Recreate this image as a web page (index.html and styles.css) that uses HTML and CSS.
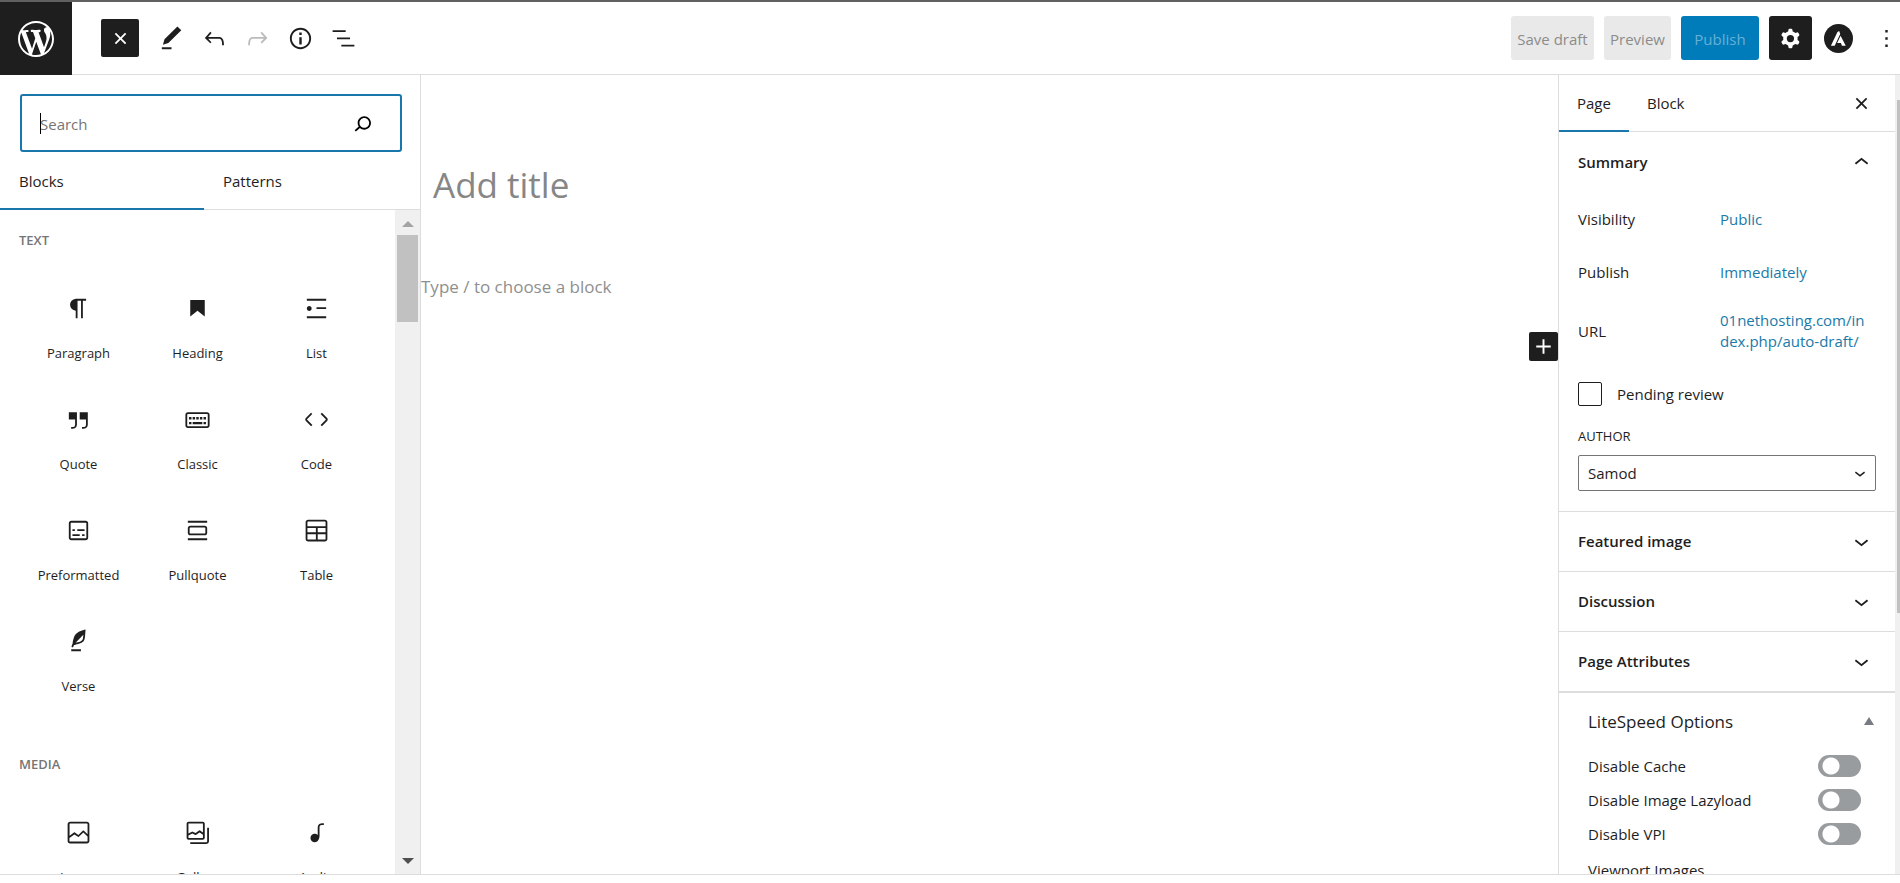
FILE: index.html
```html
<!DOCTYPE html>
<html lang="en">
<head>
<meta charset="utf-8">
<title>Add New Page</title>
<link rel="stylesheet" href="styles.css">
</head>
<body>
<div class="editor">
  <header class="topbar">
    <a class="site-logo" href="#" aria-label="View Pages">
      <svg viewBox="0 0 20 20"><path d="M20 10c0-5.51-4.49-10-10-10C4.48 0 0 4.49 0 10c0 5.52 4.48 10 10 10 5.51 0 10-4.48 10-10zM7.78 15.37L4.37 6.22c.55-.02 1.17-.08 1.17-.08.5-.06.44-1.13-.06-1.11 0 0-1.45.11-2.37.11-.18 0-.37 0-.58-.01C4.12 2.69 6.87 1.11 10 1.11c2.33 0 4.45.87 6.05 2.34-.68-.11-1.65.39-1.65 1.58 0 .74.45 1.36.9 2.1.35.61.55 1.36.55 2.46 0 1.49-1.4 5-1.4 5l-3.03-8.37c.54-.02.82-.17.82-.17.5-.05.44-1.25-.06-1.22 0 0-1.44.12-2.38.12-.87 0-2.33-.12-2.33-.12-.5-.03-.56 1.2-.06 1.22l.92.08 1.26 3.41zM17.41 10c.24-.64.74-1.87.43-4.25.7 1.29 1.05 2.71 1.05 4.25 0 3.29-1.73 6.24-4.4 7.78.97-2.59 1.94-5.2 2.92-7.78zM6.1 18.09C3.12 16.65 1.11 13.53 1.11 10c0-1.3.23-2.48.72-3.59C3.25 10.3 4.67 14.2 6.1 18.09zm4.03-6.63l2.58 6.98c-.86.29-1.76.45-2.71.45-.79 0-1.57-.11-2.29-.33.81-2.38 1.62-4.74 2.42-7.1z"/></svg>
    </a>
    <div class="tools">
      <button class="tool tool-inserter" aria-label="Toggle block inserter"><svg class="icon" viewBox="0 0 24 24"><path d="M12 13.06l3.712 3.713 1.061-1.06L13.061 12l3.712-3.712-1.06-1.06L12 10.938 8.288 7.227l-1.061 1.06L10.939 12l-3.712 3.712 1.06 1.061L12 13.061z"/></svg></button>
      <button class="tool" aria-label="Tools"><svg class="icon" viewBox="0 0 24 24"><path d="M20.1 5.1L16.9 2 6.2 12.7l-1.3 4.4 4.5-1.3L20.1 5.1zM4 20.8h8v-1.5H4v1.5z"/></svg></button>
      <button class="tool" aria-label="Undo"><svg class="icon" viewBox="0 0 24 24"><path d="M18.3 11.7c-.6-.6-1.4-.9-2.3-.9H6.7l2.9-3.3-1.1-1-4.5 5L8.5 16l1-1-2.7-2.7H16c.5 0 .9.2 1.3.5 1 1 1 3.4 1 4.5v.3h1.5v-.2c0-1.5 0-4.3-1.5-5.7z"/></svg></button>
      <button class="tool" aria-label="Redo" disabled><svg class="icon" viewBox="0 0 24 24"><path d="M15.6 6.5l-1.1 1 2.9 3.3H8c-.9 0-1.7.3-2.3.9-1.4 1.5-1.4 4.2-1.4 5.6v.2h1.5v-.3c0-1.1 0-3.5 1-4.5.3-.3.7-.5 1.3-.5h9.2L14.5 15l1.1 1.1 4.6-4.6-4.6-5z"/></svg></button>
      <button class="tool" aria-label="Details"><svg class="icon" viewBox="0 0 24 24"><path d="M12 3.2c-4.8 0-8.8 3.9-8.8 8.8 0 4.8 3.9 8.8 8.8 8.8 4.8 0 8.8-3.9 8.8-8.8 0-4.8-4-8.8-8.8-8.8zm0 16c-4 0-7.2-3.3-7.2-7.2C4.8 8 8 4.8 12 4.8s7.2 3.3 7.2 7.2c0 4-3.2 7.2-7.2 7.2zM11 17h2v-6h-2v6zm0-8h2V7h-2v2z"/></svg></button>
      <button class="tool" aria-label="List View"><svg class="icon" viewBox="0 0 24 24"><path d="M13.8 5.2H3v1.5h10.8V5.2zm-3.6 12v1.5H21v-1.5H10.2zm7.2-6H6.6v1.5h10.8v-1.5z"/></svg></button>
    </div>
    <div class="actions">
      <button class="btn btn-draft" disabled>Save draft</button>
      <button class="btn btn-preview" disabled>Preview</button>
      <button class="btn btn-publish" disabled>Publish</button>
      <button class="btn btn-settings" aria-label="Settings"><svg class="icon" viewBox="0 0 24 24"><path fill-rule="evenodd" d="M10.289 4.836A1 1 0 0111.275 4h1.306a1 1 0 01.987.836l.244 1.466c.787.26 1.503.679 2.108 1.218l1.393-.522a1 1 0 011.216.437l.653 1.13a1 1 0 01-.23 1.273l-1.148.944a6.025 6.025 0 010 2.435l1.149.946a1 1 0 01.23 1.272l-.653 1.13a1 1 0 01-1.216.437l-1.394-.522c-.605.54-1.32.958-2.108 1.218l-.244 1.466a1 1 0 01-.987.836h-1.306a1 1 0 01-.986-.836l-.244-1.466a5.995 5.995 0 01-2.108-1.218l-1.394.522a1 1 0 01-1.217-.436l-.653-1.131a1 1 0 01.23-1.272l1.149-.946a6.026 6.026 0 010-2.435l-1.148-.944a1 1 0 01-.23-1.272l.653-1.131a1 1 0 011.217-.437l1.393.522a5.994 5.994 0 012.108-1.218l.244-1.466zM14.929 12a3 3 0 11-6 0 3 3 0 016 0z"/></svg></button>
      <button class="plain astra" aria-label="Astra Settings"><svg class="icon" viewBox="0 0 84 84"><circle cx="42" cy="42" r="42"/><path fill="#fff" d="M20 63l19-40 5-3 3 9-16 34zM48 34l15 29H52l-3-8H38z"/></svg></button>
      <button class="plain more" aria-label="Options"><svg class="icon" viewBox="0 0 24 24"><path d="M13 19h-2v-2h2v2zm0-6h-2v-2h2v2zm0-6h-2V5h2v2z"/></svg></button>
    </div>
  </header>

  <div class="body">
    <aside class="inserter">
      <div class="search">
        <input class="search-input" type="search" placeholder="Search" aria-label="Search for blocks and patterns">
        <span class="caret"></span>
        <svg class="icon search-icon" viewBox="0 0 24 24"><path d="M13.5 6C10.5 6 8 8.5 8 11.5c0 1.1.3 2.1.9 3l-3.4 3 1 1.1 3.4-2.9c1 .9 2.2 1.4 3.6 1.4 3 0 5.5-2.5 5.5-5.5C19 8.5 16.5 6 13.5 6zm0 9.5c-2.2 0-4-1.8-4-4s1.8-4 4-4 4 1.8 4 4-1.8 4-4 4z"/></svg>
      </div>
      <div class="inserter-tabs" role="tablist">
        <button class="inserter-tab selected" role="tab" aria-selected="true">Blocks</button>
        <button class="inserter-tab" role="tab" aria-selected="false">Patterns</button>
      </div>
      <div class="inserter-panel">
        <div class="block-list">
          <h2 class="category">Text</h2>
          <div class="blocks">
            <button class="block"><svg class="icon" viewBox="0 0 24 24"><path d="M18.3 4H9.9v-.1l-.9.2c-2.3.4-4 2.4-4 4.8s1.7 4.4 4 4.8l.7.1V20h1.5V5.5h2.9V20h1.5V5.5h2.7V4z"/></svg>Paragraph</button>
            <button class="block"><svg class="icon" viewBox="0 0 24 24"><path d="M6 5v13.6l6-4.8 6 4.8V5H6z"/></svg>Heading</button>
            <button class="block"><svg class="icon" viewBox="0 0 24 24"><path d="M4 4v1.5h16V4H4zm8 8.5h8V11h-8v1.5zM4 20h16v-1.5H4V20zm4-8c0-1.1-.9-2-2-2s-2 .9-2 2 .9 2 2 2 2-.9 2-2z"/></svg>List</button>
            <button class="block"><svg class="icon" viewBox="0 0 24 24"><path d="M13 6v6h5.2v4c0 .8-.2 1.4-.5 1.7-.6.6-1.6.6-2.5.5h-.3v1.5h.5c1 0 2.3-.1 3.3-1 .6-.6 1-1.6 1-2.8V6H13zm-9 6h5.2v4c0 .8-.2 1.4-.5 1.7-.6.6-1.6.6-2.5.5h-.3v1.5h.5c1 0 2.3-.1 3.3-1 .6-.6 1-1.6 1-2.8V6H4v6z"/></svg>Quote</button>
            <button class="block"><svg class="icon" viewBox="0 0 24 24"><path d="M20 6H4c-1.1 0-2 .9-2 2v9c0 1.1.9 2 2 2h16c1.1 0 2-.9 2-2V8c0-1.1-.9-2-2-2zm.5 11c0 .3-.2.5-.5.5H4c-.3 0-.5-.2-.5-.5V8c0-.3.2-.5.5-.5h16c.3 0 .5.2.5.5v9zM10 10H8v2h2v-2zm-5 2h2v-2H5v2zm8-2h-2v2h2v-2zm-5 6h8v-2H8v2zm6-4h2v-2h-2v2zm3 0h2v-2h-2v2zm0 4h2v-2h-2v2zM5 16h2v-2H5v2z"/></svg>Classic</button>
            <button class="block"><svg class="icon" viewBox="0 0 24 24"><path d="M20.8 10.7l-4.3-4.3-1.1 1.1 4.3 4.3c.1.1.1.3 0 .4l-4.3 4.3 1.1 1.1 4.3-4.3c.7-.8.7-1.9 0-2.6zM4.2 11.8l4.3-4.3-1-1-4.3 4.3c-.7.7-.7 1.8 0 2.5l4.3 4.3 1.1-1.1-4.3-4.3c-.2-.1-.2-.3-.1-.4z"/></svg>Code</button>
            <button class="block"><svg class="icon" viewBox="0 0 24 24"><path d="M18 4H6c-1.1 0-2 .9-2 2v12c0 1.1.9 2 2 2h12c1.1 0 2-.9 2-2V6c0-1.1-.9-2-2-2zm.5 14c0 .3-.2.5-.5.5H6c-.3 0-.5-.2-.5-.5V6c0-.3.2-.5.5-.5h12c.3 0 .5.2.5.5v12z"/><path d="M7 16.5h6V15H7v1.5zm4-4h6V11h-6v1.5zM9 11H7v1.5h2V11zm6 5.5h2V15h-2v1.5z"/></svg>Preformatted</button>
            <button class="block"><svg class="icon" viewBox="0 0 24 24"><path d="M18 8H6c-1.1 0-2 .9-2 2v4c0 1.1.9 2 2 2h12c1.1 0 2-.9 2-2v-4c0-1.1-.9-2-2-2zm.5 6c0 .3-.2.5-.5.5H6c-.3 0-.5-.2-.5-.5v-4c0-.3.2-.5.5-.5h12c.3 0 .5.2.5.5v4zM4 4v1.5h16V4H4zm0 16h16v-1.5H4V20z"/></svg>Pullquote</button>
            <button class="block"><svg class="icon" viewBox="0 0 24 24"><path d="M19 3H5c-1.1 0-2 .9-2 2v14c0 1.1.9 2 2 2h14c1.1 0 2-.9 2-2V5c0-1.1-.9-2-2-2zM5 4.5h14c.3 0 .5.2.5.5v3.5h-15V5c0-.3.2-.5.5-.5zm8 5.5h6.5v3.5H13V10zm-1.5 3.5h-7V10h7v3.5zm-7 5.5v-4h7v4.5H5c-.3 0-.5-.2-.5-.5zm14.5.5h-6V15h6.5v4c0 .3-.2.5-.5.5z"/></svg>Table</button>
            <button class="block"><svg class="icon" viewBox="0 0 24 24"><path d="M17.8 2l-.9.3c-.1 0-3.6 1-5.2 2.1C10 5.5 9.3 6.5 8.9 7.1c-.6.9-1.7 4.7-1.7 6.3l-.9 2.3c-.2.4 0 .8.4 1 .1 0 .2.1.3.1.3 0 .6-.2.7-.5l.6-1.5c.3 0 .7-.1 1.2-.2.7-.1 1.4-.3 2.2-.5.8-.2 1.6-.5 2.4-.8.7-.3 1.4-.7 1.9-1.2s.8-1.2 1-1.9c.2-.7.3-1.6.4-2.4.1-.8.1-1.7.2-2.5 0-.8.1-1.5.2-2.1V2zm-1.9 5.6c-.1.8-.2 1.5-.3 2.1-.2.6-.4 1-.6 1.3-.3.3-.8.6-1.4.9-.7.3-1.4.5-2.2.8-.6.2-1.3.3-1.8.4L15 7.5c.3-.3.6-.7 1-1.1 0 .4 0 .8-.1 1.2zM6 20h8v-1.5H6V20z"/></svg>Verse</button>
          </div>
          <h2 class="category">Media</h2>
          <div class="blocks">
            <button class="block"><svg class="icon" viewBox="0 0 24 24"><path d="M19 3H5c-1.1 0-2 .9-2 2v14c0 1.1.9 2 2 2h14c1.1 0 2-.9 2-2V5c0-1.1-.9-2-2-2zM5 4.5h14c.3 0 .5.2.5.5v8.4l-3-2.9c-.3-.3-.8-.3-1 0L11.9 14 9 12c-.3-.2-.6-.2-.8 0l-3.6 2.6V5c-.1-.3.1-.5.4-.5zm14 15H5c-.3 0-.5-.2-.5-.5v-2.4l4.1-3 3 1.9c.3.2.7.2.9-.1L16 12l3.5 3.4V19c0 .3-.2.5-.5.5z"/></svg>Image</button>
            <button class="block"><svg class="icon" viewBox="0 0 24 24"><path fill-rule="evenodd" d="M16.375 4.5H4.625a.125.125 0 0 0-.125.125v8.254l2.859-1.54a.75.75 0 0 1 .68-.016l2.384 1.142 2.89-2.074a.75.75 0 0 1 .874 0l2.313 1.66V4.625a.125.125 0 0 0-.125-.125Zm.125 9.398-2.75-1.975-2.813 2.02a.75.75 0 0 1-.76.067l-2.444-1.17L4.5 14.583v1.792c0 .069.056.125.125.125h11.75a.125.125 0 0 0 .125-.125v-2.477ZM4.625 3C3.728 3 3 3.728 3 4.625v11.75C3 17.273 3.728 18 4.625 18h11.75c.898 0 1.625-.727 1.625-1.625V4.625C18 3.728 17.273 3 16.375 3H4.625ZM20 8v11c0 .69-.31 1-.999 1H6v1.5h13.001c1.52 0 2.499-.982 2.499-2.5V8H20Z"/></svg>Gallery</button>
            <button class="block"><svg class="icon" viewBox="0 0 24 24"><path d="M17.7 4.3c-1.2 0-2.8 0-3.8 1-.6.6-.9 1.5-.9 2.6V14c-.6-.6-1.5-1-2.5-1C8.6 13 7 14.6 7 16.5S8.6 20 10.5 20c1.5 0 2.8-1 3.3-2.3.5-.8.7-1.8.7-2.5V7.9c0-.7.2-1.2.5-1.6.6-.6 1.8-.6 2.8-.6h.3V4.3h-.4z"/></svg>Audio</button>
          </div>
        </div>
        <div class="scrollbar">
          <svg class="scroll-arrow" viewBox="0 0 12 6"><path fill="#a3a3a3" d="M0 6l6-6 6 6z"/></svg>
          <div class="scroll-thumb"></div>
          <svg class="scroll-arrow scroll-down" viewBox="0 0 12 6"><path fill="#505050" d="M0 0h12L6 6z"/></svg>
        </div>
      </div>
    </aside>

    <main class="canvas">
      <h1 class="post-title">Add title</h1>
      <p class="prompt">Type / to choose a block</p>
      <button class="add-block" aria-label="Add block"><svg class="icon" viewBox="0 0 24 24"><path d="M18 11.2h-5.2V6h-1.6v5.2H6v1.6h5.2V18h1.6v-5.2H18z"/></svg></button>
    </main>

    <aside class="settings">
      <div class="settings-content">
        <div class="settings-tabs">
          <button class="settings-tab selected">Page</button>
          <button class="settings-tab">Block</button>
          <button class="plain close" aria-label="Close settings"><svg class="icon" viewBox="0 0 24 24"><path d="M12 13.06l3.712 3.713 1.061-1.06L13.061 12l3.712-3.712-1.06-1.06L12 10.938 8.288 7.227l-1.061 1.06L10.939 12l-3.712 3.712 1.06 1.061L12 13.061z"/></svg></button>
        </div>
        <section class="summary">
          <button class="panel-toggle">Summary<svg class="icon" viewBox="0 0 24 24"><path d="M6.5 12.4L12 8l5.5 4.4-.9 1.2L12 10l-4.5 3.6-1-1.2z"/></svg></button>
          <div class="summary-body">
            <div class="field"><span>Visibility</span><a href="#">Public</a></div>
            <div class="field"><span>Publish</span><a href="#">Immediately</a></div>
            <div class="field field-url"><span>URL</span><a href="#">01nethosting.com/index.php/auto-draft/</a></div>
            <label class="pending"><input class="checkbox" type="checkbox">Pending review</label>
            <label class="author-label" for="author">Author</label>
            <div class="select-wrap">
              <select class="author" id="author"><option>Samod</option></select>
              <svg class="select-arrow" viewBox="0 0 24 24"><path d="M17.5 11.6L12 16l-5.5-4.4.9-1.2L12 14l4.5-3.6 1 1.2z"/></svg>
            </div>
          </div>
        </section>
        <section class="panel"><button class="panel-toggle">Featured image<svg class="icon" viewBox="0 0 24 24"><path d="M17.5 11.6L12 16l-5.5-4.4.9-1.2L12 14l4.5-3.6 1 1.2z"/></svg></button></section>
        <section class="panel"><button class="panel-toggle">Discussion<svg class="icon" viewBox="0 0 24 24"><path d="M17.5 11.6L12 16l-5.5-4.4.9-1.2L12 14l4.5-3.6 1 1.2z"/></svg></button></section>
        <section class="panel"><button class="panel-toggle">Page Attributes<svg class="icon" viewBox="0 0 24 24"><path d="M17.5 11.6L12 16l-5.5-4.4.9-1.2L12 14l4.5-3.6 1 1.2z"/></svg></button></section>
        <section class="litespeed">
          <button class="litespeed-title">LiteSpeed Options<svg class="litespeed-arrow" viewBox="0 0 10 8"><path d="M0 8l5-8 5 8z"/></svg></button>
          <label class="option">Disable Cache<input class="switch" type="checkbox"></label>
          <label class="option">Disable Image Lazyload<input class="switch" type="checkbox"></label>
          <label class="option">Disable VPI<input class="switch" type="checkbox"></label>
          <p class="viewport">Viewport Images</p>
        </section>
      </div>
      <div class="settings-scrollbar"><div class="settings-thumb"></div></div>
    </aside>
  </div>
  <footer class="footer"></footer>
</div>
</body>
</html>
```

FILE: styles.css
```css
* { box-sizing: border-box; }

body {
  margin: 0;
  background: #fff;
  color: #1e1e1e;
  font: 15px/21px "Open Sans", "Noto Sans", sans-serif;
}

button, input, select { font: inherit; color: inherit; }
button { padding: 0; border: 0; background: none; }
h1, h2, p { margin: 0; }
a { color: #1a7aa8; text-decoration: none; }
svg { display: block; flex: none; fill: currentColor; }
.icon { width: 29px; height: 29px; }

.editor {
  display: flex;
  flex-direction: column;
  height: 100vh;
  overflow: hidden;
  border-top: 2px solid #606060;
}

/* Top bar */
.topbar {
  display: flex;
  align-items: stretch;
  height: 73px;
  flex: none;
  border-bottom: 1px solid #ddd;
}
.site-logo {
  display: flex;
  align-items: center;
  justify-content: center;
  width: 72px;
  height: 73px;
  background: #1e1e1e;
  color: #fff;
}
.site-logo svg { width: 36px; height: 36px; }
.tools { display: flex; align-items: center; gap: 5px; padding-left: 29px; }
.tool {
  display: flex;
  align-items: center;
  justify-content: center;
  width: 38px;
  height: 38px;
  border-radius: 2px;
}
.tool:disabled { color: #bbb; }
.tool-inserter { background: #1e1e1e; color: #fff; margin-right: 8px; }
.actions { display: flex; align-items: center; gap: 10px; margin: 0 -1px 0 auto; }
.btn {
  display: flex;
  align-items: center;
  justify-content: center;
  height: 44px;
  border-radius: 3px;
  white-space: nowrap;
}
.btn-draft { width: 83px; padding-top: 2px; background: #e9e9e9; color: #8c8c8c; }
.btn-preview { width: 67px; padding-top: 2px; background: #e9e9e9; color: #8c8c8c; }
.btn-publish { width: 78px; padding-top: 2px; background: #007cba; color: #66b0d6; }
.btn-settings { width: 43px; background: #1e1e1e; color: #fff; }
.plain { display: flex; }
.astra { margin-left: 2px; }
.more { margin-left: 9px; }

/* Columns */
.body { display: flex; flex: 1; min-height: 0; }

/* Block inserter */
.inserter {
  display: flex;
  flex-direction: column;
  width: 421px;
  flex: none;
  border-right: 1px solid #ddd;
}
.search { position: relative; margin: 19px 18px 0 20px; }
.search-input {
  display: block;
  width: 100%;
  height: 58px;
  padding: 2px 60px 0 18px;
  border: 2px solid #1a77ab;
  border-radius: 3px;
  background: #fff;
  outline: 0;
  appearance: none;
}
.search-input::placeholder { color: #757575; opacity: 1; }
.caret { position: absolute; left: 20px; top: 19px; width: 1px; height: 21px; background: #000; }
.search-icon { position: absolute; right: 25px; top: 15px; color: #000; }
.inserter-tabs { display: flex; height: 58px; flex: none; border-bottom: 1px solid #ddd; }
.inserter-tab { padding: 0 19px; height: 58px; font-weight: 500; text-align: left; }
.inserter-tab.selected { width: 204px; padding-top: 2px; border-bottom: 2px solid #1a77ab; }
.inserter-panel { display: flex; flex: 1; min-height: 0; }
.block-list { flex: 1; overflow: hidden; padding: 19px 0 0 19px; }
.category { color: #757575; font-size: 13px; font-weight: 600; line-height: 22px; text-transform: uppercase; }
.blocks { display: grid; grid-template-columns: repeat(3, 119px); padding: 21px 0 37px; }
.block {
  display: flex;
  flex-direction: column;
  align-items: center;
  gap: 20px;
  height: 111px;
  padding-top: 22px;
  font-size: 13px;
  line-height: 20px;
}
.scrollbar { display: flex; flex-direction: column; align-items: center; width: 25px; padding: 11px 0 10px; background: #f0f0f0; }
.scroll-arrow { width: 12px; height: 6px; }
.scroll-thumb { width: 21px; height: 87px; margin-top: 8px; background: #c1c1c1; }
.scroll-down { margin-top: auto; }

/* Canvas */
.canvas { display: flex; flex-direction: column; flex: 1; min-width: 0; padding-top: 84px; }
.post-title { padding-left: 12px; color: #868686; font-size: 35px; font-weight: 400; line-height: 52px; }
.prompt { padding-top: 62px; color: #8f8f8f; font-size: 17px; line-height: 28px; }
.add-block {
  display: flex;
  align-self: flex-end;
  margin-top: 31px;
  border-radius: 2px;
  background: #1e1e1e;
  color: #fff;
}

/* Settings sidebar */
.settings { display: flex; width: 342px; flex: none; border-left: 1px solid #ddd; }
.settings-content { flex: 1; min-width: 0; overflow: hidden; }
.settings-tabs { display: flex; height: 57px; border-bottom: 1px solid #ddd; }
.settings-tab { height: 57px; padding: 0 18px; font-weight: 500; }
.settings-tab.selected { padding-top: 2px; border-bottom: 2px solid #1a77ab; }
.close { align-items: center; margin-left: auto; margin-right: 19px; }
.panel-toggle {
  display: flex;
  align-items: center;
  justify-content: space-between;
  width: 100%;
  height: 60px;
  padding: 0 19px;
  font-weight: 600;
}
.summary-body { padding: 1px 19px 20px; }
.field { display: grid; grid-template-columns: 142px 146px; align-items: center; min-height: 53px; }
.field a { overflow-wrap: anywhere; }
.field-url { min-height: 64px; }
.pending { display: flex; align-items: center; gap: 15px; margin-top: 19px; }
.checkbox { width: 24px; height: 24px; margin: 0; border: 1px solid #1e1e1e; border-radius: 2px; appearance: none; }
.author-label { display: block; margin: 20px 0 8px; font-size: 13px; font-weight: 500; text-transform: uppercase; }
.select-wrap { position: relative; }
.author {
  display: block;
  width: 100%;
  height: 36px;
  padding: 0 9px;
  border: 1px solid #757575;
  border-radius: 2px;
  background: #fff;
  appearance: none;
}
.select-arrow { position: absolute; right: 5px; top: 7px; width: 22px; height: 22px; }
.panel { border-top: 1px solid #ddd; }
.panel .panel-toggle { height: 59px; }
.litespeed { padding: 12px 29px 0; border-top: 2px solid #ddd; }
.litespeed-title {
  display: flex;
  align-items: center;
  justify-content: space-between;
  width: 100%;
  height: 32px;
  margin-bottom: 12px;
  font-size: 17px;
  font-weight: 500;
}
.litespeed-arrow { width: 10px; height: 8px; margin-right: -8px; color: #787c82; }
.option { display: flex; align-items: center; justify-content: space-between; height: 34px; padding-right: 5px; }
.switch {
  width: 43px;
  height: 22px;
  margin: 0;
  border-radius: 11px;
  background: radial-gradient(circle at 13px 11px, #fff 8px, #999c9e 9px);
  appearance: none;
}
.viewport { padding-top: 9px; white-space: nowrap; }
.settings-scrollbar { width: 5px; padding: 25px 0 0 2px; background: #f0f0f0; }
.settings-thumb { height: 513px; background: #c1c1c1; }

.footer { height: 9px; flex: none; border-top: 1px solid #ddd; }
```
